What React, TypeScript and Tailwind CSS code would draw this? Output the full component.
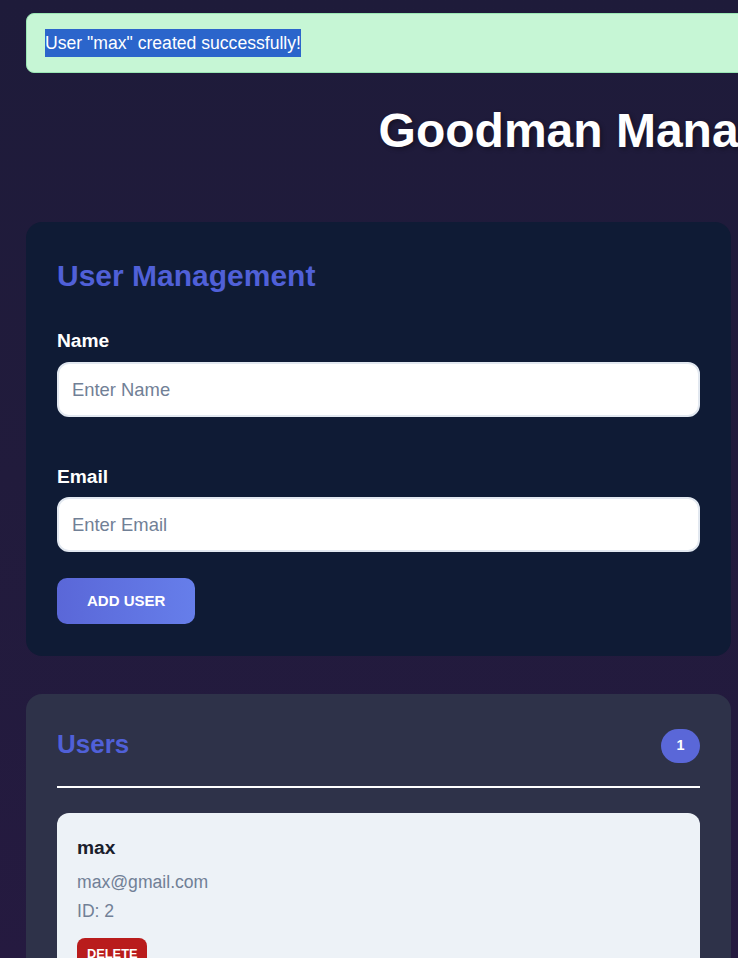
import React from "react";

export default function App() {
  const font = { fontFamily: '"Liberation Sans", Arial, sans-serif' };
  return (
    <div
      className="w-[738px] h-[958px] overflow-hidden bg-gradient-to-b from-[#1e1b3a] via-[#211b3c] to-[#251a40]"
      style={font}
    >
      <div className="w-[1472px] px-[26px] pt-[13px]">
        {/* Toast */}
        <div className="rounded-[8px] border border-[#9ae6b4] bg-[#c6f6d5] px-[18px] py-[15px]">
          <span className="inline-block h-[28px] bg-[#2b65cb] text-[17.6px] leading-[28px] text-white">
            User "max" created successfully!
          </span>
        </div>

        {/* Title */}
        <h1
          className="mt-[30px] text-center text-[48px] font-bold leading-[56px] text-white"
          style={{ textShadow: "2px 2px 4px rgba(0,0,0,0.35)" }}
        >
          Goodman Management System
        </h1>

        <div className="mt-[63px] flex w-[705px] flex-col gap-[38px]">
          {/* User Management card */}
          <div className="rounded-[16px] bg-[#0f1b35] px-[31px] pt-[36px] pb-[32px]">
            <h2 className="text-[30px] font-bold leading-[36px] text-[#5060d8]">
              User Management
            </h2>
            <div className="mt-[35px]">
              <label className="mb-[9px] block text-[19.2px] font-bold leading-[24px] text-white">
                Name
              </label>
              <input
                className="h-[55px] w-full rounded-[12px] border-2 border-[#e2e8f0] bg-white px-[13px] text-[18.4px] text-[#2d3748] outline-none placeholder:text-[#718096]"
                placeholder="Enter Name"
                style={font}
              />
            </div>
            <div className="mt-[48px]">
              <label className="mb-[8px] block text-[19.2px] font-bold leading-[24px] text-white">
                Email
              </label>
              <input
                className="h-[55px] w-full rounded-[12px] border-2 border-[#e2e8f0] bg-white px-[13px] text-[18.4px] text-[#2d3748] outline-none placeholder:text-[#718096]"
                placeholder="Enter Email"
                style={font}
              />
            </div>
            <button
              className="mt-[26px] h-[46px] rounded-[10px] bg-gradient-to-r from-[#5a67d8] to-[#667eea] px-[30px] text-[15px] font-bold uppercase text-white"
              style={font}
            >
              Add User
            </button>
          </div>

          {/* Users card */}
          <div className="rounded-[16px] bg-[#2e3249] px-[31px] pt-[35px] pb-[32px]">
            <div className="flex items-center justify-between border-b-2 border-white pb-[23px]">
              <h2 className="pb-[4px] text-[26px] font-bold leading-[30px] text-[#5060d8]">
                Users
              </h2>
              <span className="flex h-[34px] w-[39px] items-center justify-center rounded-full bg-[#5a67d8] text-[14.4px] font-bold text-white">
                1
              </span>
            </div>
            <div className="mt-[25px] rounded-[12px] bg-[#edf2f7] px-[20px] pt-[23px] pb-[20px]">
              <div className="text-[19.2px] font-bold leading-[24px] text-[#1a202c]">
                max
              </div>
              <div className="mt-[9px] text-[17.6px] leading-[26px] text-[#718096]">
                max@gmail.com
              </div>
              <div className="mt-[3px] text-[17.6px] leading-[26px] text-[#718096]">
                ID: 2
              </div>
              <button
                className="mt-[14px] rounded-[8px] bg-[#b91c1c] px-[10px] py-[8px] text-[12.8px] font-bold uppercase leading-[15px] text-white"
                style={font}
              >
                Delete
              </button>
            </div>
          </div>
        </div>
      </div>
    </div>
  );
}
